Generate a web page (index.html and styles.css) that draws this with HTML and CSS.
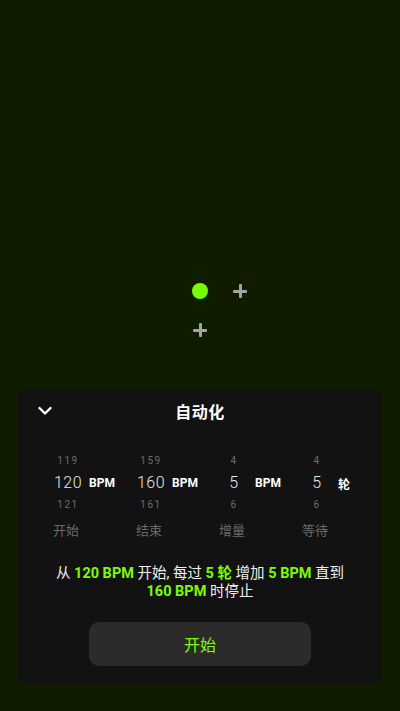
FILE: index.html
```html
<!DOCTYPE html>
<html>
<head>
    <title>自动化</title>
    <link rel="stylesheet" href="styles.css">
</head>
<body>
    <div class="app">
        <div class="stage">
            <div class="beat beat-on" style="left: 192px; top: 283px;"></div>
            <div class="beat beat-add" style="left: 233px; top: 284px;"></div>
            <div class="beat beat-add" style="left: 193px; top: 323px;"></div>
        </div>

        <div class="panel">
            <div class="panel-head">
                <button class="close">
                    <svg width="14" height="10" viewBox="0 0 14 10">
                        <polyline points="1.5,2 7,7.5 12.5,2" fill="none" stroke="#fff" stroke-width="2.4" stroke-linecap="round" stroke-linejoin="round"/>
                    </svg>
                </button>
                <div class="title">自动化</div>
            </div>

            <div class="pickers">
                <div class="picker">
                    <div class="wheel">
                        <div class="wheel-side">119</div>
                        <div class="wheel-value">120</div>
                        <div class="wheel-side">121</div>
                    </div>
                    <div class="unit">BPM</div>
                    <div class="picker-label">开始</div>
                </div>
                <div class="picker">
                    <div class="wheel">
                        <div class="wheel-side">159</div>
                        <div class="wheel-value">160</div>
                        <div class="wheel-side">161</div>
                    </div>
                    <div class="unit">BPM</div>
                    <div class="picker-label">结束</div>
                </div>
                <div class="picker">
                    <div class="wheel">
                        <div class="wheel-side">4</div>
                        <div class="wheel-value">5</div>
                        <div class="wheel-side">6</div>
                    </div>
                    <div class="unit">BPM</div>
                    <div class="picker-label">增量</div>
                </div>
                <div class="picker">
                    <div class="wheel">
                        <div class="wheel-side">4</div>
                        <div class="wheel-value">5</div>
                        <div class="wheel-side">6</div>
                    </div>
                    <div class="unit">轮</div>
                    <div class="picker-label">等待</div>
                </div>
            </div>

            <p class="summary">从 <b>120 BPM</b> 开始, 每过 <b>5 轮</b> 增加 <b>5 BPM</b> 直到<br><b>160 BPM</b> 时停止</p>

            <button class="start">开始</button>
        </div>
    </div>
</body>
</html>
```

FILE: styles.css
```css
body {
    margin: 0;
    background: #0f1c00;
    font-family: Roboto, "Noto Sans CJK SC", sans-serif;
    color: #fff;
}
.app {
    height: 711px;
    display: flex;
    flex-direction: column;
}
.stage {
    flex: 1;
    position: relative;
}
.beat {
    position: absolute;
}
.beat-on {
    width: 16px;
    height: 16px;
    border-radius: 50%;
    background: #76ff03;
}
.beat-add {
    width: 14px;
    height: 14px;
}
.beat-add::before,
.beat-add::after {
    content: "";
    position: absolute;
    background: #a3a3a3;
    border-radius: 1px;
}
.beat-add::before {
    left: 0;
    top: 5.5px;
    width: 14px;
    height: 3px;
}
.beat-add::after {
    left: 5.5px;
    top: 0;
    width: 3px;
    height: 14px;
}
.panel {
    margin: 0 18px 27px;
    height: 294px;
    background: #121212;
    border-radius: 8px;
    display: flex;
    flex-direction: column;
    align-items: center;
}
.panel-head {
    position: relative;
    align-self: stretch;
    height: 42px;
    display: flex;
    align-items: center;
    justify-content: center;
}
.close {
    position: absolute;
    left: 20px;
    top: 16px;
    padding: 0;
    border: none;
    background: none;
    width: 14px;
    height: 10px;
    display: flex;
}
.title {
    font-size: 16px;
    font-weight: bold;
    letter-spacing: 0.5px;
}
.pickers {
    align-self: stretch;
    margin-top: 19px;
    padding-left: 35px;
    display: grid;
    grid-template-columns: repeat(4, 83px);
}
.picker {
    display: grid;
    grid-template-columns: 30px auto;
    column-gap: 6px;
    align-items: center;
}
.wheel {
    text-align: center;
}
.wheel-side {
    height: 20px;
    line-height: 20px;
    font-size: 10px;
    letter-spacing: 1.5px;
    color: #6c6c6c;
}
.wheel-value {
    height: 24px;
    line-height: 24px;
    font-size: 16px;
    font-weight: 300;
    letter-spacing: 0.5px;
    color: #e8e8e8;
}
.unit {
    font-size: 12px;
    font-weight: bold;
    color: #fff;
}
.picker-label {
    grid-column: 1 / 3;
    margin-top: 6px;
    font-size: 13px;
    line-height: 20px;
    color: #6a6a6a;
}
.summary {
    margin: 24px 0 0;
    text-align: center;
    font-size: 14.5px;
    line-height: 18px;
    color: #f0f0f0;
}
.summary b {
    color: #7cfc00;
}
.start {
    margin-top: 21px;
    width: 222px;
    height: 44px;
    border: none;
    border-radius: 10px;
    background: #2b2b2b;
    color: #7cfc00;
    font-family: "Noto Sans CJK SC", sans-serif;
    font-size: 16px;
}
```
